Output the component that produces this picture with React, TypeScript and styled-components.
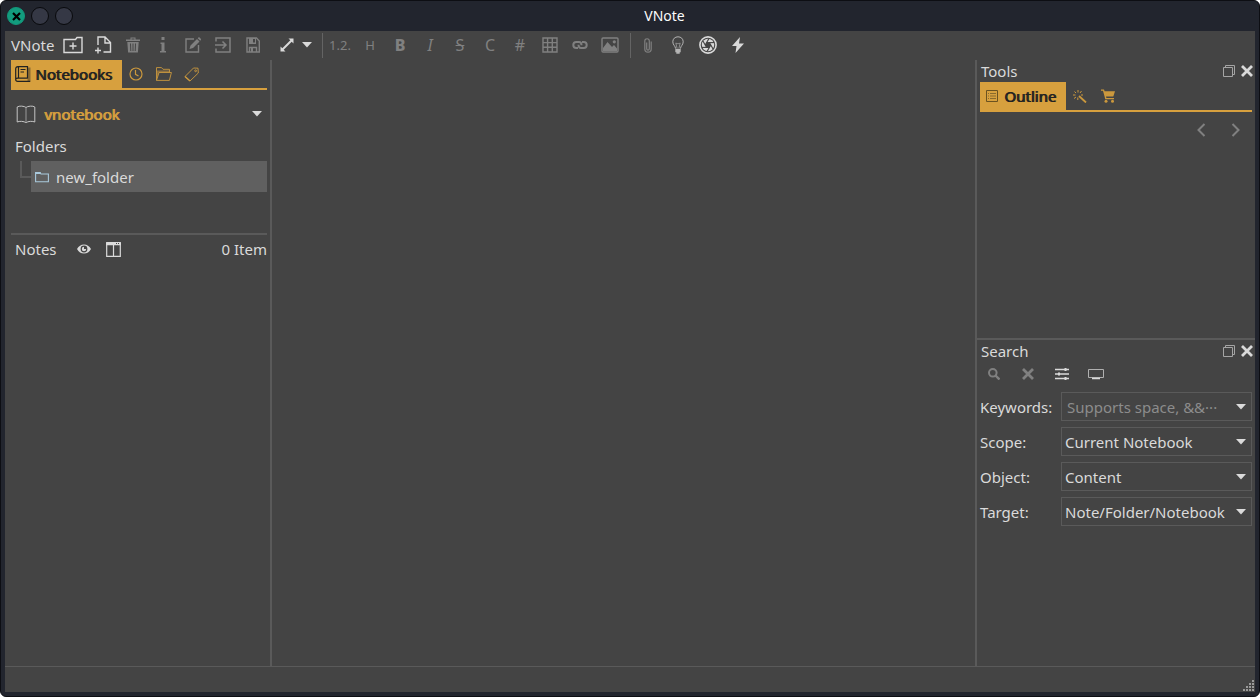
import React from "react";
import styled, { createGlobalStyle } from "styled-components";

const c = {
  frame: "#22252e",
  bg: "#444444",
  line: "#5a5a5a",
  text: "#dadada",
  dim: "#808080",
  accent: "#d7a03e",
  tabText: "#222222",
  selected: "#606060",
};

const GlobalStyle = createGlobalStyle`
  *, *::before, *::after { box-sizing: border-box; }
  body { margin: 0; background: #ffffff; }
  button, input, select { font: inherit; color: inherit; margin: 0; padding: 0; border: 0; background: none; }
  h1, h2, p, ul { margin: 0; padding: 0; font: inherit; list-style: none; }
  svg { display: block; flex: none; }
`;

const Window = styled.div`
  display: flex;
  flex-direction: column;
  min-height: 100vh;
  padding: 0 4px 4px;
  border: 1px solid #0d0e13;
  border-radius: 6px;
  background: ${c.frame};
  color: ${c.text};
  font: 15px/22px "Noto Sans", sans-serif;
`;

const TitleBar = styled.header`
  display: flex;
  align-items: center;
  height: 30px;
  padding-left: 2px;
`;

const WindowButtons = styled.div`
  display: flex;
  gap: 6px;
  width: 67px;
`;

const Round = styled.button<{ $close?: boolean }>`
  display: grid;
  place-items: center;
  width: 18px;
  height: 18px;
  border-radius: 50%;
  border: 1px solid ${(p) => (p.$close ? "#12977b" : "#08090c")};
  background: ${(p) => (p.$close ? "#129c7e" : "#353845")};
  color: #000000;
`;

const Title = styled.h1`
  flex: 1;
  text-align: center;
  font-size: 14px;
  line-height: 20px;
  color: #fcfcfc;
`;

const Client = styled.div`
  flex: 1;
  display: flex;
  flex-direction: column;
  background: ${c.bg};
`;

const Toolbar = styled.div`
  display: flex;
  align-items: center;
  height: 29px;
  padding: 0 0 1px 6px;
`;

const MenuButton = styled.button`
  width: 47px;
  text-align: left;
`;

const Tool = styled.button<{ $on?: boolean; $width?: number }>`
  display: grid;
  place-items: center;
  width: ${(p) => p.$width ?? 30}px;
  height: 28px;
  color: ${(p) => (p.$on ? c.text : c.dim)};
`;

const SplitTool = styled.div`
  display: flex;
  gap: 8px;
  padding-left: 12px;
`;

const Glyph = styled.span<{ $size?: number; $bold?: boolean; $italic?: boolean; $strike?: boolean }>`
  font-size: ${(p) => p.$size ?? 16}px;
  line-height: 22px;
  font-weight: ${(p) => (p.$bold ? 800 : 400)};
  font-style: ${(p) => (p.$italic ? "italic" : "normal")};
  text-decoration: ${(p) => (p.$strike ? "line-through" : "none")};
`;

const Separator = styled.span<{ $gap?: number }>`
  width: 1px;
  height: 25px;
  margin: 0 2px 0 ${(p) => p.$gap ?? 5}px;
  background: #646464;
`;

const Body = styled.div`
  flex: 1;
  display: grid;
  grid-template-columns: 267px minmax(0, 1fr) 280px;
`;

const LeftDock = styled.aside`
  padding: 0 3px 0 6px;
  border-right: 2px solid ${c.line};
`;

const Editor = styled.main``;

const RightDock = styled.aside`
  display: flex;
  flex-direction: column;
  border-left: 2px solid ${c.line};
`;

const Tabs = styled.div`
  display: flex;
  align-items: stretch;
  height: 30px;
  border-bottom: 2px solid ${c.accent};
`;

const ActiveTab = styled.button<{ $inset?: number }>`
  display: flex;
  align-items: center;
  gap: ${(p) => p.$inset ?? 4}px;
  padding: 0 10px 0 ${(p) => p.$inset ?? 4}px;
  background: ${c.accent};
  color: ${c.tabText};
  text-shadow: 1px 0 0 ${c.tabText};
`;

const Tab = styled.button`
  display: grid;
  place-items: center;
  width: 28px;
  color: #cb983d;
`;

const NotebookPicker = styled.button`
  display: flex;
  align-items: center;
  gap: 8px;
  width: 100%;
  height: 48px;
  padding: 0 5px;
  color: ${c.text};
`;

const NotebookName = styled.span`
  flex: 1;
  text-align: left;
  color: ${c.accent};
  text-shadow: 1px 0 0 ${c.accent};
`;

const SectionLabel = styled.h2`
  padding: 0 4px;
  height: 23px;
  line-height: 16px;
`;

const Tree = styled.ul`
  height: 74px;
  padding-left: 9px;
  border-bottom: 2px solid ${c.line};
`;

const TreeRow = styled.li`
  display: flex;
`;

const Branch = styled.span`
  width: 11px;
  height: 17px;
  border-left: 2px solid ${c.line};
  border-bottom: 2px solid ${c.line};
`;

const TreeItem = styled.button`
  flex: 1;
  display: flex;
  align-items: center;
  gap: 7px;
  height: 31px;
  padding-left: 4px;
  background: ${c.selected};
`;

const NotesHeader = styled.div`
  display: flex;
  align-items: center;
  height: 28px;
  padding-left: 4px;
`;

const NotesLabel = styled.h2`
  width: 55px;
`;

const Count = styled.span`
  margin-left: auto;
`;

const Panel = styled.section<{ $divided?: boolean }>`
  padding: 0 3px;
  ${(p) => p.$divided && `height: 280px; border-bottom: 2px solid ${c.line};`}
`;

const PanelTitle = styled.div`
  display: flex;
  align-items: center;
  height: 22px;
  padding-left: 1px;
`;

const PanelName = styled.h2`
  flex: 1;
`;

const TitleAction = styled.button`
  display: grid;
  place-items: center;
  width: 18px;
  height: 18px;
  &:last-child { margin-right: -4px; }
`;

const OutlineNav = styled.div`
  display: flex;
  justify-content: flex-end;
  height: 36px;
  align-items: center;
  gap: 4px;
  padding-right: 2px;
`;

const SearchTools = styled.div`
  display: flex;
  align-items: center;
  gap: 6px;
  height: 24px;
  margin-bottom: 6px;
`;

const Form = styled.form`
  display: grid;
  grid-template-columns: 81px minmax(0, 1fr);
  align-items: center;
  row-gap: 6px;
`;

const Combo = styled.div`
  display: grid;
  grid-template-columns: minmax(0, 1fr) 20px;
  align-items: center;
  height: 29px;
  border: 1px solid ${c.line};
  & > svg { grid-area: 1 / 2; justify-self: center; pointer-events: none; }
`;

const Select = styled.select`
  grid-area: 1 / 1 / 2 / 3;
  appearance: none;
  width: 100%;
  height: 27px;
  padding-left: 3px;
  outline: none;
`;

const Input = styled.input`
  grid-area: 1 / 1;
  width: 100%;
  height: 27px;
  padding-left: 5px;
  outline: none;
  &::placeholder { color: #8c8c8c; opacity: 1; }
`;

const StatusBar = styled.footer`
  display: flex;
  justify-content: flex-end;
  align-items: flex-end;
  height: 26px;
  border-top: 1px solid ${c.line};
`;

type IconProps = { w: number; h: number; sw?: number; children: React.ReactNode };
const Line = ({ w, h, sw = 1, children }: IconProps) => (
  <svg width={w} height={h} viewBox={`0 0 ${w} ${h}`} fill="none" stroke="currentColor" strokeWidth={sw} aria-hidden="true">
    {children}
  </svg>
);
const Fill = ({ w, h, children }: IconProps) => (
  <svg width={w} height={h} viewBox={`0 0 ${w} ${h}`} fill="currentColor" aria-hidden="true">
    {children}
  </svg>
);

const Caret = () => (
  <Fill w={10} h={6}><path d="M0 0h10L5 5.4z" /></Fill>
);
const NewFolder = () => (
  <Line w={20} h={18} sw={1.4}><path d="M1 3.500h11.500l1.500-2h5v15H1zM10 6.500v7M6.500 10h7" /></Line>
);
const NewNote = () => (
  <Line w={18} h={18} sw={1.4}><path d="M4 9V1h7l5.500 5.500V16H9.500M11 1v6h5.500M4 11.500v6M1 14.500h6" /></Line>
);
const Trash = () => (
  <Fill w={14} h={16}>
    <path fillRule="evenodd" d="M0 2.500h4.500V.5h5v2H14V4H0zM5.500 1.500v1h3v-1zM1.300 5h11.400l-.8 10.500H2.100zM4 6.500l.3 7.500h1L5 6.500zm2.500 0V14h1V6.500zm2.500 0L8.700 14h1l.3-7.500z" />
  </Fill>
);
const Info = () => (
  <Fill w={6} h={16}><path d="M1.500 0h3v3h-3zM.5 5.500h4V14H6v1.500H0V14h1.500V7h-1z" /></Fill>
);
const Edit = () => (
  <Line w={16} h={16} sw={1.4}>
    <path d="M9 2H1v13h12.500V8" />
    <path fill="currentColor" stroke="none" d="M4.500 12l1-3.500L12 2l2.500 2.500L8 11zM12.700 1.300L14 0l2.300 2.300L15.200 3.700z" />
  </Line>
);
const Import = () => (
  <Line w={16} h={16} sw={1.5}><path d="M1 4.500V1h14v14H1v-3.500M0 8h11M7.500 4.500L11 8l-3.500 3.500" /></Line>
);
const Save = () => (
  <Line w={14} h={16} sw={1.4}>
    <path d="M1 1h9.500L13.300 4v11H1zM3.500 15v-4.500h7V15" />
    <path fill="currentColor" stroke="none" fillRule="evenodd" d="M3 1h7v6H3zm4 1v3.500h2V2zM5 11h2v4H5z" />
  </Line>
);
const Expand = () => (
  <Fill w={14} h={14}>
    <path d="M8.500.5h5v5l-1.800-1.800-8 8L5.500 13.500h-5v-5l1.800 1.800 8-8z" />
  </Fill>
);
const TableIcon = () => (
  <Line w={16} h={16} sw={1.4}><path d="M1 1h14v14H1zM1 5.600h14M1 10.300h14M5.600 1v14M10.300 1v14" /></Line>
);
const LinkIcon = () => (
  <Line w={16} h={10} sw={2}>
    <path d="M6 8H4.300a3 3 0 0 1 0-6H7c1.600 0 2.500 1.200 2.500 3.200" />
    <path d="M10 2h1.700a3 3 0 0 1 0 6H9C7.400 8 6.500 6.800 6.500 4.800" />
  </Line>
);
const ImageIcon = () => (
  <Line w={18} h={16} sw={1.4}>
    <rect x="1" y="1" width="16" height="14" rx="1" />
    <path fill="currentColor" stroke="none" d="M2 14v-3l4.500-6 4.500 5 2-2 3 3.500V14z" />
    <circle cx="13.300" cy="4.800" r="1.600" fill="currentColor" stroke="none" />
  </Line>
);
const Clip = () => (
  <Line w={8} h={15} sw={1.2}><path d="M2.700 4.500v6.200c0 1.800 2.600 1.800 2.600 0V3c0-3-4.500-3-4.500 0v8c0 4.200 6.400 4.200 6.400 0V3.500" /></Line>
);
const Bulb = () => (
  <Line w={12} h={18} sw={1}>
    <g stroke="#b4b4b4">
      <path d="M3.500 12.500C3.500 10 .8 9 .8 5.800.8 2.800 3 .8 6 .8s5.200 2 5.200 5c0 3.200-2.700 4.200-2.700 6.700" />
      <path d="M5 12L3.800 7l1.500.8L6 7l.7.8L8.200 7 7 12" stroke="#8c8c8c" />
    </g>
    <path fill="#b4b4b4" stroke="none" d="M3.300 12.800h5.400v3.400H7.700v1.500H4.300v-1.500h-1z" />
  </Line>
);
const Shutter = () => (
  <Line w={18} h={18} sw={1.6}>
    <circle cx="9" cy="9" r="8.100" />
    <circle cx="9" cy="9" r="6.200" fill="currentColor" stroke="none" />
    <g stroke={c.bg} strokeWidth="1.100">
      {[0, 60, 120, 180, 240, 300].map((a) => (
        <path key={a} transform={`rotate(${a} 9 9)`} d="M7.600 6.600L15 6.600" />
      ))}
    </g>
    <path fill={c.bg} stroke="none" d="M7.600 6.600h2.800L11.800 9l-1.400 2.400H7.600L6.200 9z" />
  </Line>
);
const Bolt = () => (
  <Fill w={12} h={16}><path d="M8 0L0 9h4.500L3.500 16 12 6.500H7z" /></Fill>
);

const NotebookIcon = () => (
  <Line w={16} h={16} sw={1.2}>
    <path fill="#8a6a32" stroke="none" d="M12.500 1.500H15.500v14h-3z" />
    <path d="M12.500 12.500V.7H3C1.500.7.700 1.500.7 3v10.500c0 1.200.8 1.800 2 1.800h12.500M.8 13c.3-.7 1-.9 2-.9h9.700M3.500.8V12M5.500 3.500h5M5.500 6h3.500" />
  </Line>
);
const Clock = () => (
  <Line w={14} h={14} sw={1.2}><circle cx="7" cy="7" r="6" /><path d="M6.500 3v4.300L9.500 9" /></Line>
);
const OpenFolder = () => (
  <Line w={17} h={14} sw={0.9}>
    <path fill="#8f7140" stroke="none" d="M1.500 3.500h13V5H4L2 11z" />
    <path d="M1.500 13.400V.6h5l1.500 1.700h6.500V5M1.500 13.400L4 5.500h12.400l-2 7.900z" />
  </Line>
);
const Tag = () => (
  <Line w={16} h={15} sw={0.9}>
    <path d="M1 9.500L9.500 1l4.500.2.300 4.800L6 14z" />
    <path d="M1 9.500L6 14" strokeWidth="1.400" />
    <circle cx="11.600" cy="3.800" r=".9" />
  </Line>
);
const Book = () => (
  <Line w={20} h={19} sw={1}>
    <g stroke="#c4c4c4">
      <path d="M10 2.500C8.500 1 3 .5 1.200 2v15c2-1 7-1 8.800.800 1.800-1.800 6.800-1.800 8.800-.800V2C17 .5 11.500 1 10 2.500z" />
      <path d="M10 2.500V18" stroke="#9a9a9a" />
    </g>
  </Line>
);
const FolderIcon = () => (
  <Line w={14} h={12} sw={1.1}>
    <g stroke="#a9c9dc"><path d="M.6 10.800V1.500H5l1 1.500h7.400v7.800z" /><path d="M.6 2h5" strokeWidth="2" /></g>
  </Line>
);
const Eye = () => (
  <Fill w={14} h={10}>
    <path fillRule="evenodd" d="M0 5C1.700 2 4 .5 7 .5S12.300 2 14 5c-1.700 3-4 4.500-7 4.500S1.700 8 0 5zm3.600 0a3.400 3.400 0 1 0 6.800 0 3.400 3.400 0 1 0-6.800 0z" />
    <path d="M7 2.800A2.200 2.200 0 1 0 9.200 5H7z" />
  </Fill>
);
const Columns = () => (
  <Line w={15} h={15} sw={1.2}>
    <path d="M.7.7h13.600v13.600H.7zM7.500 3v11" /><path d="M0 2h15" strokeWidth="2.500" />
    <path d="M10 1.500h1M12 1.500h1" stroke={c.bg} />
  </Line>
);
const Restore = () => (
  <Line w={12} h={12}><g stroke="#a5a5a5"><path d="M.5 2.500h9v9h-9zM2.500 2.500v-2h9v9h-2" /></g></Line>
);
const Cross = ({ s = 12, sw = 2.8 }: { s?: number; sw?: number }) => (
  <Line w={s} h={s} sw={sw}><path d={`M1 1L${s - 1} ${s - 1}M${s - 1} 1L1 ${s - 1}`} /></Line>
);
const OutlineIcon = () => (
  <Line w={12} h={12}>
    <g stroke="#6b5220"><path d="M.5.500h11v11H.5z" /><path d="M2 3.500h1M4 3.500h6M2 6h1M4 6h6M2 8.500h1M4 8.500h6" stroke="#8a6a2c" /></g>
  </Line>
);
const Wand = () => (
  <Line w={14} h={13} sw={1}>
    <path d="M6 6l7 6.500" strokeWidth="1.800" />
    <path d="M5 0v2.500M8.500 1L7 3M1.500 1.500L3 3M0 5h2.500M1 8.500L3 7M4.800 7.500V10M8 5h2" />
  </Line>
);
const Cart = () => (
  <Fill w={14} h={14}>
    <path d="M0 .5h3l.6 1.700H14l-1.700 5.300H5l.4 1.400H13v1.300H4.300L2 1.800H0z" />
    <circle cx="5" cy="12.200" r="1.500" /><circle cx="11.500" cy="12.200" r="1.500" />
  </Fill>
);
const Chevron = ({ right }: { right?: boolean }) => (
  <Line w={9} h={14} sw={2}><path d={right ? "M1.500 1L7.500 7l-6 6" : "M7.500 1l-6 6 6 6"} /></Line>
);
const Magnifier = () => (
  <Line w={12} h={12} sw={2}><circle cx="4.800" cy="4.800" r="3.800" /><path d="M7.500 7.500l4 4" strokeWidth="2.400" /></Line>
);
const Sliders = () => (
  <Line w={14} h={12} sw={1.4}><path d="M0 1.500h14M0 6h14M0 10.500h14" /><path d="M10.500 0v3M4 4.500v3M10.500 9v3" strokeWidth="2" /></Line>
);
const Screen = () => (
  <Line w={16} h={11}><path d="M.5.500h15v8H.5z" stroke="#b0b0b0" /><path d="M4 9.500h8" strokeWidth="1.500" /></Line>
);
const Grip = () => (
  <Fill w={12} h={12}>
    {[[9, 0], [6, 3], [9, 3], [3, 6], [6, 6], [9, 6], [0, 9], [3, 9], [6, 9], [9, 9]].map(([x, y]) => (
      <rect key={`${x}-${y}`} x={x} y={y} width="2" height="2" fill="#9a9a9a" />
    ))}
  </Fill>
);

type ToolDef = { label: string; icon: React.ReactNode; on?: boolean };
const fileTools: ToolDef[] = [
  { label: "New folder", icon: <NewFolder />, on: true },
  { label: "New note", icon: <NewNote />, on: true },
  { label: "Delete", icon: <Trash /> },
  { label: "Info", icon: <Info /> },
  { label: "Edit", icon: <Edit /> },
  { label: "Exit edit mode", icon: <Import /> },
  { label: "Save", icon: <Save /> },
];
const formatTools: ToolDef[] = [
  { label: "Heading sequence", icon: <Glyph $size={13}>1.2.</Glyph> },
  { label: "Heading", icon: <Glyph $size={13}>H</Glyph> },
  { label: "Bold", icon: <Glyph $bold>B</Glyph> },
  { label: "Italic", icon: <Glyph $italic>I</Glyph> },
  { label: "Strikethrough", icon: <Glyph $strike>S</Glyph> },
  { label: "Code", icon: <Glyph>C</Glyph> },
  { label: "Code block", icon: <Glyph>#</Glyph> },
  { label: "Table", icon: <TableIcon /> },
  { label: "Link", icon: <LinkIcon /> },
  { label: "Image", icon: <ImageIcon /> },
];
const extraTools: ToolDef[] = [
  { label: "Attachments", icon: <Clip /> },
  { label: "Snippets", icon: <Bulb />, on: true },
  { label: "Capture", icon: <Shutter />, on: true },
  { label: "Flash page", icon: <Bolt />, on: true },
];

const ToolGroup = ({ tools }: { tools: ToolDef[] }) => (
  <>
    {tools.map((t) => (
      <Tool key={t.label} type="button" aria-label={t.label} $on={t.on}>{t.icon}</Tool>
    ))}
  </>
);

const PanelHeader = ({ name }: { name: string }) => (
  <PanelTitle>
    <PanelName>{name}</PanelName>
    <TitleAction type="button" aria-label={`Float ${name}`}><Restore /></TitleAction>
    <TitleAction type="button" aria-label={`Close ${name}`}><Cross /></TitleAction>
  </PanelTitle>
);

const choices = [
  { id: "scope", label: "Scope:", value: "Current Notebook" },
  { id: "object", label: "Object:", value: "Content" },
  { id: "target", label: "Target:", value: "Note/Folder/Notebook" },
];

export default function App() {
  return (
    <>
      <GlobalStyle />
      <Window>
        <TitleBar>
          <WindowButtons>
            <Round type="button" aria-label="Close" $close><Cross s={9} sw={2.2} /></Round>
            <Round type="button" aria-label="Minimize" />
            <Round type="button" aria-label="Maximize" />
          </WindowButtons>
          <Title>VNote</Title>
        </TitleBar>
        <Client>
          <Toolbar>
            <MenuButton type="button">VNote</MenuButton>
            <ToolGroup tools={fileTools} />
            <SplitTool>
              <Tool type="button" aria-label="Full screen" $on $width={14}><Expand /></Tool>
              <Tool type="button" aria-label="View options" $on $width={10}><Caret /></Tool>
            </SplitTool>
            <Separator $gap={10} />
            <ToolGroup tools={formatTools} />
            <Separator />
            <ToolGroup tools={extraTools} />
          </Toolbar>
          <Body>
            <LeftDock>
              <Tabs>
                <ActiveTab type="button"><NotebookIcon />Notebooks</ActiveTab>
                <Tab type="button" aria-label="History"><Clock /></Tab>
                <Tab type="button" aria-label="Explorer"><OpenFolder /></Tab>
                <Tab type="button" aria-label="Tags"><Tag /></Tab>
              </Tabs>
              <NotebookPicker type="button">
                <Book />
                <NotebookName>vnotebook</NotebookName>
                <Caret />
              </NotebookPicker>
              <SectionLabel>Folders</SectionLabel>
              <Tree>
                <TreeRow>
                  <Branch />
                  <TreeItem type="button"><FolderIcon />new_folder</TreeItem>
                </TreeRow>
              </Tree>
              <NotesHeader>
                <NotesLabel>Notes</NotesLabel>
                <Tool type="button" aria-label="View" $on $width={28}><Eye /></Tool>
                <Tool type="button" aria-label="Split" $on><Columns /></Tool>
                <Count>0 Item</Count>
              </NotesHeader>
            </LeftDock>
            <Editor />
            <RightDock>
              <Panel $divided>
                <PanelHeader name="Tools" />
                <Tabs>
                  <ActiveTab type="button" $inset={6}><OutlineIcon />Outline</ActiveTab>
                  <Tab type="button" aria-label="Snippets"><Wand /></Tab>
                  <Tab type="button" aria-label="Cart"><Cart /></Tab>
                </Tabs>
                <OutlineNav>
                  <Tool type="button" aria-label="Previous"><Chevron /></Tool>
                  <Tool type="button" aria-label="Next"><Chevron right /></Tool>
                </OutlineNav>
              </Panel>
              <Panel>
                <PanelHeader name="Search" />
                <SearchTools>
                  <Tool type="button" aria-label="Search" $width={28}><Magnifier /></Tool>
                  <Tool type="button" aria-label="Clear" $width={28}><Cross /></Tool>
                  <Tool type="button" aria-label="Advanced settings" $on $width={28}><Sliders /></Tool>
                  <Tool type="button" aria-label="Console" $on $width={28}><Screen /></Tool>
                </SearchTools>
                <Form>
                  <label htmlFor="keywords">Keywords:</label>
                  <Combo>
                    <Input id="keywords" placeholder="Supports space, &&···" />
                    <Caret />
                  </Combo>
                  {choices.map((f) => (
                    <React.Fragment key={f.id}>
                      <label htmlFor={f.id}>{f.label}</label>
                      <Combo>
                        <Select id={f.id} defaultValue={f.value}>
                          <option>{f.value}</option>
                        </Select>
                        <Caret />
                      </Combo>
                    </React.Fragment>
                  ))}
                </Form>
              </Panel>
            </RightDock>
          </Body>
          <StatusBar><Grip /></StatusBar>
        </Client>
      </Window>
    </>
  );
}
